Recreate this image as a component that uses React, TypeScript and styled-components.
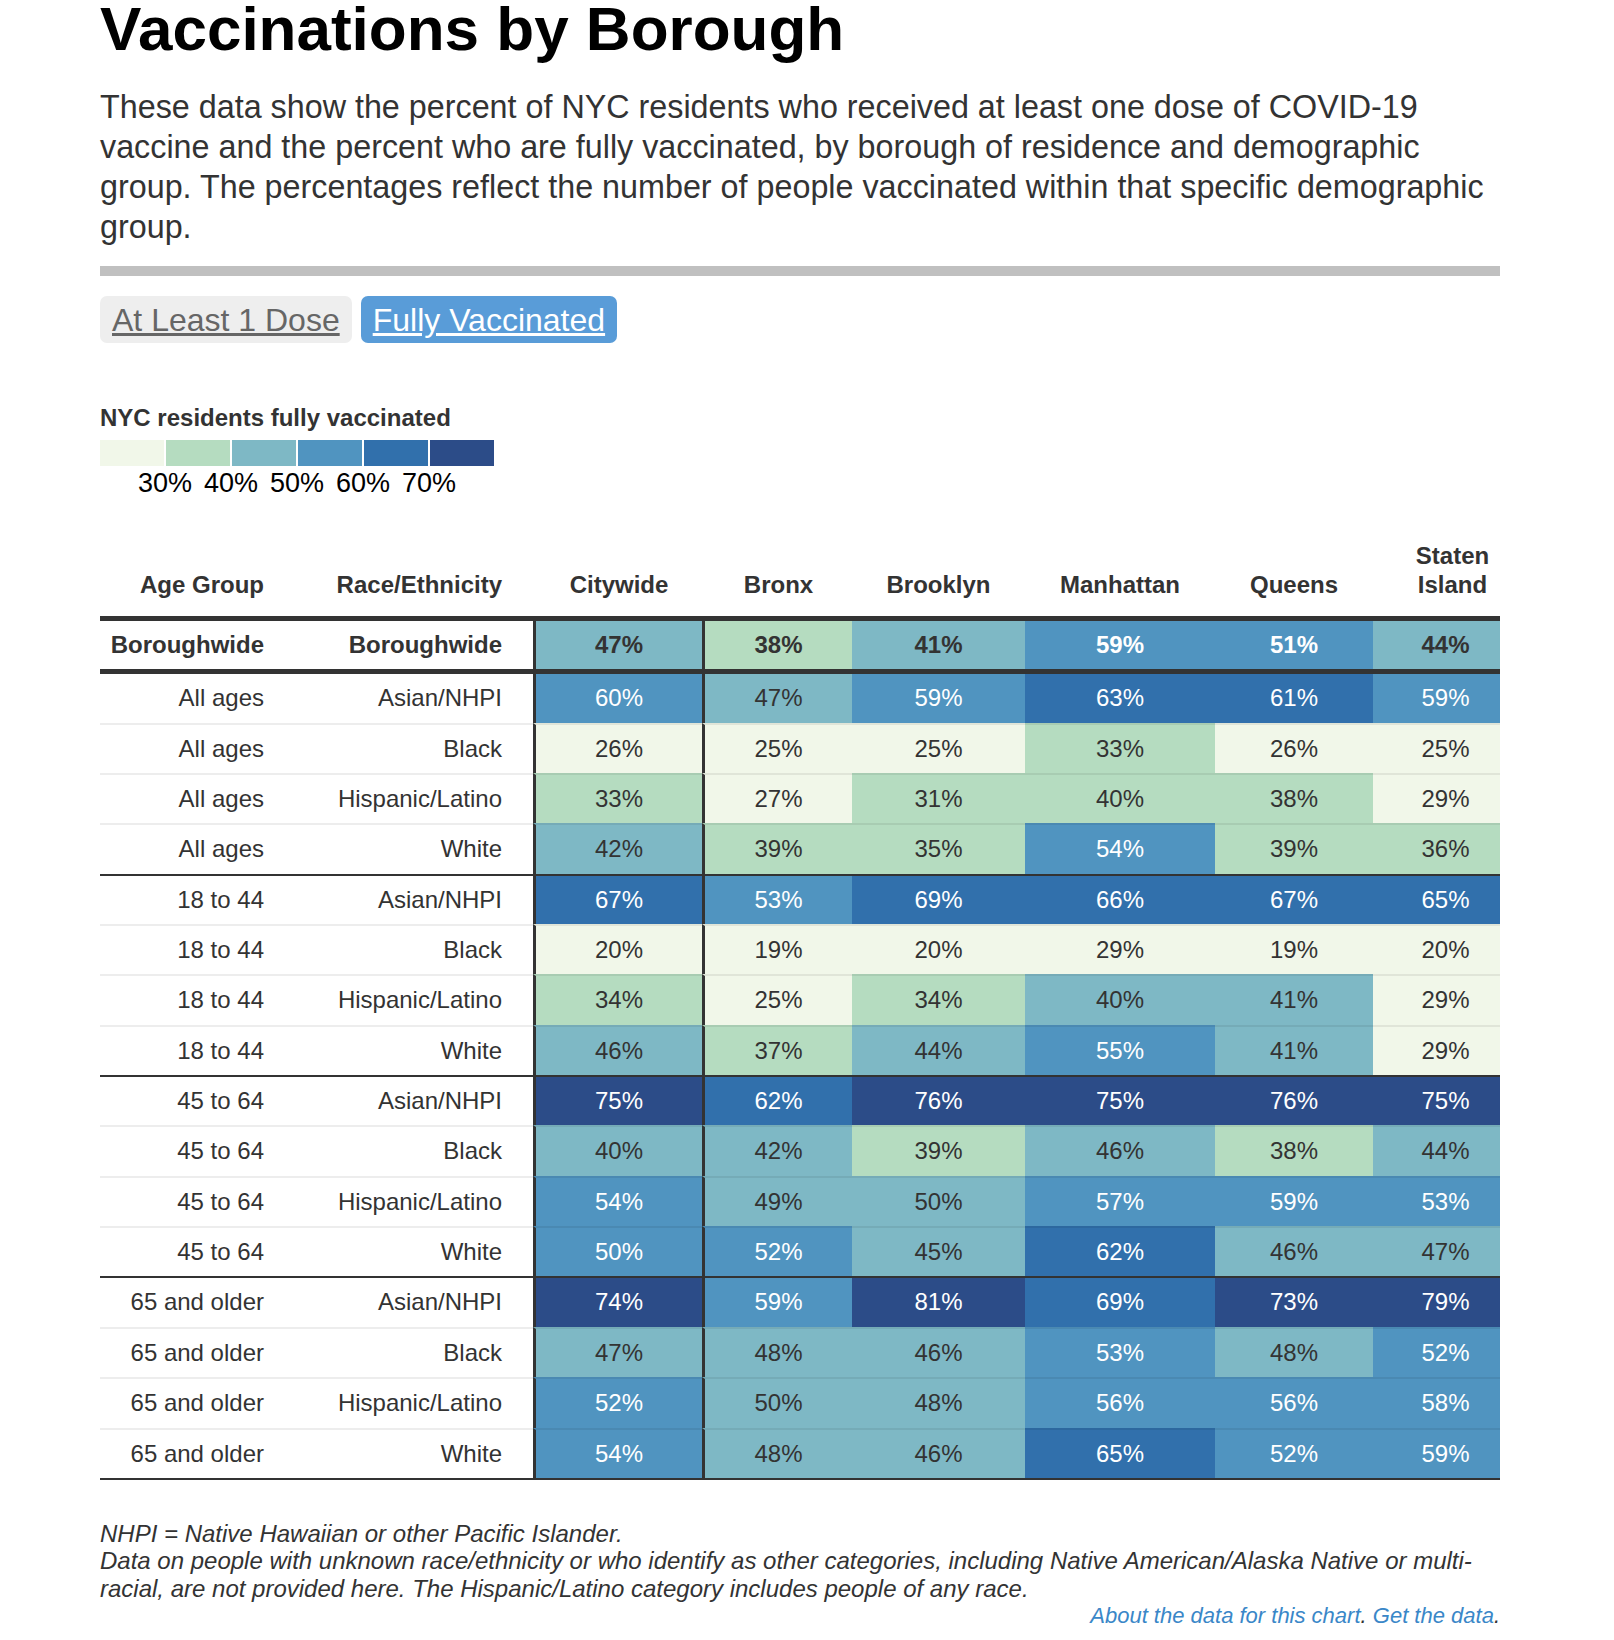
import React from 'react';
import styled, { createGlobalStyle, css } from 'styled-components';

const GlobalStyle = createGlobalStyle`
  html, body { margin: 0; padding: 0; background: #fff; }
  body { font-family: "Liberation Sans", Arial, Helvetica, sans-serif; color: #333; }
`;

const Page = styled.main`
  width: 1400px;
  margin-left: 100px;
`;

const Title = styled.h1`
  margin: 0;
  font-size: 62px;
  line-height: 58px;
  font-weight: 700;
  color: #000;
`;

const Intro = styled.p`
  margin: 29px 0 0;
  font-size: 32.3px;
  line-height: 40px;
  color: #333;
  white-space: nowrap;
`;

const Divider = styled.hr`
  margin: 19px 0 0;
  border: 0;
  height: 10px;
  background: #c0c0c0;
`;

const Toggle = styled.div`
  display: flex;
  gap: 9px;
  margin-top: 20px;
`;

const ToggleButton = styled.a<{ $active?: boolean }>`
  display: block;
  padding: 5px 12px 3px;
  font-size: 32px;
  line-height: 39px;
  border-radius: 7px;
  cursor: pointer;
  background: ${(p) => (p.$active ? '#599cd8' : '#eeeeee')};
  color: ${(p) => (p.$active ? '#ffffff' : '#666666')};
  text-decoration: underline;
`;

const Legend = styled.div`
  margin-top: 61px;
`;

const LegendTitle = styled.div`
  font-size: 24px;
  line-height: 28px;
  font-weight: 700;
  color: #333;
`;

const Swatches = styled.div`
  display: flex;
  gap: 2px;
  margin-top: 8px;
`;

const Swatch = styled.div<{ $c: string }>`
  width: 64px;
  height: 26px;
  background: ${(p) => p.$c};
`;

const Ticks = styled.div`
  display: flex;
  padding-left: 32px;
  margin-top: 2px;
`;

const Tick = styled.div`
  width: 66px;
  text-align: center;
  font-size: 27px;
  line-height: 30px;
  color: #000;
`;

const Table = styled.table`
  margin-top: 37px;
  width: 1400px;
  table-layout: fixed;
  border-collapse: separate;
  border-spacing: 0;
`;

type Align = 'right' | 'center';

const HeadCell = styled.th<{ $align: Align; $padL?: number; $padR?: number }>`
  padding: 6px ${(p) => p.$padR ?? 10}px 17px ${(p) => p.$padL ?? 10}px;
  vertical-align: bottom;
  font-size: 24px;
  line-height: 29px;
  font-weight: 700;
  color: #333;
  text-align: ${(p) => p.$align};
  border-bottom: 5px solid #333;
`;

type Edge = 'none' | 'light' | 'dark';

const edges = css<{ $edge: Edge; $summary?: boolean; $last?: boolean }>`
  border-top: ${(p) =>
    p.$edge === 'light' ? '2px solid rgba(0,0,0,0.07)' : p.$edge === 'dark' ? '2px solid #333' : '0'};
  border-bottom: ${(p) => (p.$summary ? '5px solid #333' : p.$last ? '2px solid #333' : '0')};
`;

const LabelCell = styled.td<{ $edge: Edge; $summary?: boolean; $last?: boolean; $padR: number }>`
  ${edges}
  padding: 0 ${(p) => p.$padR}px 0 0;
  text-align: right;
  font-size: 24px;
  line-height: 48.35px;
  font-weight: ${(p) => (p.$summary ? 700 : 400)};
  color: #333;
  white-space: nowrap;
`;

const ValueCell = styled.td<{
  $edge: Edge;
  $summary?: boolean;
  $last?: boolean;
  $bg: string;
  $onDark: boolean;
  $divider: boolean;
}>`
  ${edges}
  padding: 0;
  background: ${(p) => p.$bg};
  color: ${(p) => (p.$onDark ? '#ffffff' : '#333333')};
  border-left: ${(p) => (p.$divider ? '3px solid #333' : '0')};
  text-align: center;
  font-size: 24px;
  line-height: 48.35px;
  font-weight: ${(p) => (p.$summary ? 700 : 400)};
  &:last-child {
    padding-left: 18px;
  }
`;

const Notes = styled.p`
  margin: 40px 0 0;
  font-size: 24px;
  font-style: italic;
  line-height: 27.5px;
  color: #333;
  white-space: nowrap;
`;

const Source = styled.p`
  margin: 0;
  text-align: right;
  font-size: 22px;
  font-style: italic;
  line-height: 27px;
  color: #333;
`;

const SourceLink = styled.a`
  color: #3a87c8;
  text-decoration: none;
`;

const COLORS = ['', '#f1f7e9', '#b5dcc0', '#7eb8c5', '#5094c0', '#3170ac', '#2c4c88'];

type Cell = [number, number];

const BOROUGHWIDE: Cell[] = [[47, 3], [38, 2], [41, 3], [59, 4], [51, 4], [44, 3]];

const RACES = ['Asian/NHPI', 'Black', 'Hispanic/Latino', 'White'];

const GROUPS: { age: string; rows: Cell[][] }[] = [
  {
    age: 'All ages',
    rows: [
      [[60, 4], [47, 3], [59, 4], [63, 5], [61, 5], [59, 4]],
      [[26, 1], [25, 1], [25, 1], [33, 2], [26, 1], [25, 1]],
      [[33, 2], [27, 1], [31, 2], [40, 2], [38, 2], [29, 1]],
      [[42, 3], [39, 2], [35, 2], [54, 4], [39, 2], [36, 2]],
    ],
  },
  {
    age: '18 to 44',
    rows: [
      [[67, 5], [53, 4], [69, 5], [66, 5], [67, 5], [65, 5]],
      [[20, 1], [19, 1], [20, 1], [29, 1], [19, 1], [20, 1]],
      [[34, 2], [25, 1], [34, 2], [40, 3], [41, 3], [29, 1]],
      [[46, 3], [37, 2], [44, 3], [55, 4], [41, 3], [29, 1]],
    ],
  },
  {
    age: '45 to 64',
    rows: [
      [[75, 6], [62, 5], [76, 6], [75, 6], [76, 6], [75, 6]],
      [[40, 3], [42, 3], [39, 2], [46, 3], [38, 2], [44, 3]],
      [[54, 4], [49, 3], [50, 3], [57, 4], [59, 4], [53, 4]],
      [[50, 4], [52, 4], [45, 3], [62, 5], [46, 3], [47, 3]],
    ],
  },
  {
    age: '65 and older',
    rows: [
      [[74, 6], [59, 4], [81, 6], [69, 5], [73, 6], [79, 6]],
      [[47, 3], [48, 3], [46, 3], [53, 4], [48, 3], [52, 4]],
      [[52, 4], [50, 3], [48, 3], [56, 4], [56, 4], [58, 4]],
      [[54, 4], [48, 3], [46, 3], [65, 5], [52, 4], [59, 4]],
    ],
  },
];

const COL_WIDTHS = [174, 259, 169, 150, 173, 190, 158, 127];
const BOROUGHS = ['Citywide', 'Bronx', 'Brooklyn', 'Manhattan', 'Queens', 'Staten Island'];

interface RowProps {
  age: string;
  race: string;
  cells: Cell[];
  edge: Edge;
  summary?: boolean;
  last?: boolean;
}

function DataRow({ age, race, cells, edge, summary, last }: RowProps) {
  return (
    <tr>
      <LabelCell $edge={edge} $summary={summary} $last={last} $padR={10}>
        {age}
      </LabelCell>
      <LabelCell $edge={edge} $summary={summary} $last={last} $padR={31}>
        {race}
      </LabelCell>
      {cells.map(([v, lvl], i) => (
        <ValueCell
          key={i}
          $edge={edge}
          $summary={summary}
          $last={last}
          $bg={COLORS[lvl]}
          $onDark={lvl >= 4}
          $divider={i < 2}
        >
          {v}%
        </ValueCell>
      ))}
    </tr>
  );
}

export default function App() {
  return (
    <>
      <GlobalStyle />
      <Page>
        <Title>Vaccinations by Borough</Title>
        <Intro>
          These data show the percent of NYC residents who received at least one dose of COVID-19
          <br />
          vaccine and the percent who are fully vaccinated, by borough of residence and demographic
          <br />
          group. The percentages reflect the number of people vaccinated within that specific demographic
          <br />
          group.
        </Intro>
        <Divider />
        <Toggle>
          <ToggleButton>At Least 1 Dose</ToggleButton>
          <ToggleButton $active>Fully Vaccinated</ToggleButton>
        </Toggle>
        <Legend>
          <LegendTitle>NYC residents fully vaccinated</LegendTitle>
          <Swatches>
            {COLORS.slice(1).map((c) => (
              <Swatch key={c} $c={c} />
            ))}
          </Swatches>
          <Ticks>
            {['30%', '40%', '50%', '60%', '70%'].map((t) => (
              <Tick key={t}>{t}</Tick>
            ))}
          </Ticks>
        </Legend>
        <Table>
          <colgroup>
            {COL_WIDTHS.map((w, i) => (
              <col key={i} style={{ width: w }} />
            ))}
          </colgroup>
          <thead>
            <tr>
              <HeadCell $align="right">Age Group</HeadCell>
              <HeadCell $align="right" $padR={31}>
                Race/Ethnicity
              </HeadCell>
              {BOROUGHS.map((b, i) => (
                <HeadCell
                  key={b}
                  $align="center"
                  $padL={i === 5 ? 32 : i < 2 ? 13 : 10}
                  $padR={i === 5 ? 0 : 10}
                >
                  {b}
                </HeadCell>
              ))}
            </tr>
          </thead>
          <tbody>
            <DataRow age="Boroughwide" race="Boroughwide" cells={BOROUGHWIDE} edge="none" summary />
            {GROUPS.map((g, gi) =>
              g.rows.map((cells, ri) => (
                <DataRow
                  key={`${gi}-${ri}`}
                  age={g.age}
                  race={RACES[ri]}
                  cells={cells}
                  edge={ri === 0 ? (gi === 0 ? 'none' : 'dark') : 'light'}
                  last={gi === GROUPS.length - 1 && ri === g.rows.length - 1}
                />
              ))
            )}
          </tbody>
        </Table>
        <Notes>
          NHPI = Native Hawaiian or other Pacific Islander.
          <br />
          Data on people with unknown race/ethnicity or who identify as other categories, including Native American/Alaska Native or multi-
          <br />
          racial, are not provided here. The Hispanic/Latino category includes people of any race.
        </Notes>
        <Source>
          <SourceLink href="#">About the data for this chart</SourceLink>.{' '}
          <SourceLink href="#">Get the data</SourceLink>.
        </Source>
      </Page>
    </>
  );
}
